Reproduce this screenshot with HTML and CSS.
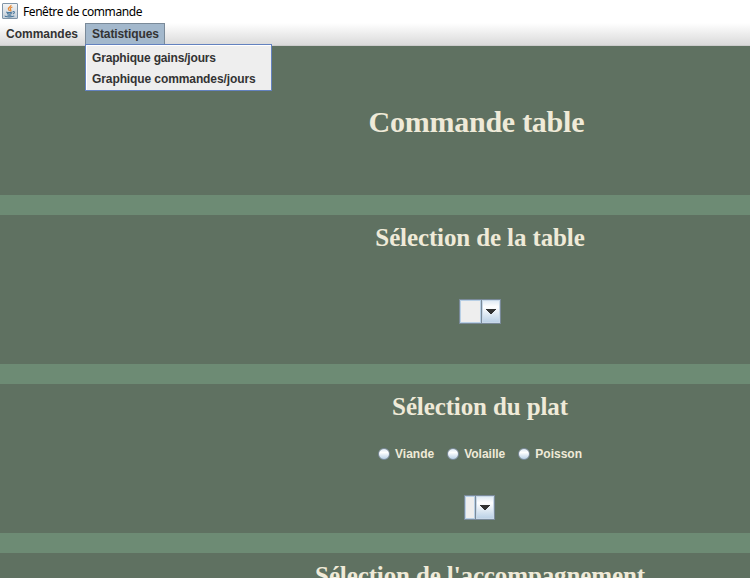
FILE: index.html
```
<!DOCTYPE html>
<html lang="fr">
<head>
<meta charset="utf-8">
<title>Fenêtre de commande</title>
<link rel="stylesheet" href="styles.css">
</head>
<body>
<header class="titlebar">
  <svg class="java" width="16" height="16" viewBox="0 0 16 16">
    <defs><linearGradient id="tile" x1="0" y1="0" x2="0" y2="1"><stop offset="0" stop-color="#f4f5f6"/><stop offset="1" stop-color="#c3ced8"/></linearGradient></defs>
    <rect x=".5" y=".5" width="15" height="15" rx=".5" fill="url(#tile)" stroke="#8095a8"/>
    <path d="M9 2C9.7 3.8 5.4 4.4 6.4 6.3L7.5 8M10.4 4C7.7 5 7.9 5.8 8.6 6.6 9.2 7.3 9 7.8 8.2 8.3" fill="none" stroke="#e5862f" stroke-width="1.2"/>
    <path d="M4.2 8.9C5.5 9.5 8.8 9.5 10.4 8.9M5 10.6C6.5 11.1 8.5 11.1 9.8 10.6M5.4 12C6.7 12.4 8.2 12.4 9.4 12M10.8 8.6C13 8.1 13 10.3 10.8 11M3.2 12.8C2.4 14.1 10.8 14.3 12.3 12.9" fill="none" stroke="#4c789b" stroke-width="1.1"/>
  </svg>
  <span class="title">Fenêtre de commande</span>
</header>
<nav class="menubar">
  <div class="menu">Commandes</div>
  <div class="menu open">Statistiques
    <div class="popup">
      <div class="item">Graphique gains/jours</div>
      <div class="item">Graphique commandes/jours</div>
    </div>
  </div>
</nav>
<main class="content">
  <section class="panel hero"><h1>Commande table&nbsp;</h1></section>
  <section class="panel">
    <h2>Sélection de la table</h2>
    <div class="combo table-combo"><span class="value"></span><span class="arrow"><svg width="10" height="5" viewBox="0 0 10 5" shape-rendering="crispEdges"><path d="M0 0H10V1H9V2H8V3H7V4H6V5H4V4H3V3H2V2H1V1H0Z"/></svg></span></div>
  </section>
  <section class="panel">
    <h2>Sélection du plat</h2>
    <div class="radios">
      <label><i class="dot"></i>Viande</label>
      <label><i class="dot"></i>Volaille</label>
      <label><i class="dot"></i>Poisson</label>
    </div>
    <div class="combo dish-combo"><span class="value"></span><span class="arrow"><svg width="10" height="5" viewBox="0 0 10 5" shape-rendering="crispEdges"><path d="M0 0H10V1H9V2H8V3H7V4H6V5H4V4H3V3H2V2H1V1H0Z"/></svg></span></div>
  </section>
  <section class="panel"><h2>Sélection de l'accompagnement</h2></section>
</main>
</body>
</html>
```
FILE: styles.css
```
* { box-sizing: border-box; }
html, body { margin: 0; height: 578px; overflow: hidden; }
body { background: #6d8b74; font: bold 12px/14px "Liberation Sans", Arial, sans-serif; color: #333; }
.titlebar { display: flex; align-items: center; height: 23px; padding-left: 2px; background: #fff; }
.java { margin-top: -1px; }
.title { margin-left: 5px; margin-top: 1px; font: 12px/16px "Noto Sans", sans-serif; letter-spacing: -0.43px; color: #000; white-space: nowrap; }
.menubar { display: flex; height: 23px; background: linear-gradient(#fff, #dadada); border-bottom: 1px solid #ccc; }
.menu { height: 22px; padding: 4px 7px 0 6px; }
.open { position: relative; width: 80px; padding: 3px 6px 0; background: #a3b8cc; border: 1px solid #7a8a99; border-bottom: 0; letter-spacing: -0.1px; }
.popup { position: absolute; z-index: 1; left: -1px; top: 20px; width: 187px; height: 47px; padding: 2px 1px; background: #eee; border: 1px solid #6382bf; box-shadow: inset 1px 1px #fff; }
.item { height: 21px; padding: 4px 5px 0; white-space: nowrap; }
.item:first-child { letter-spacing: -0.17px; }
.content { display: flex; flex-direction: column; gap: 20px; width: 960px; height: 532px; overflow: hidden; }
.panel { display: flex; flex-direction: column; align-items: center; height: 149px; flex: none; background: #5f7161; color: #efead8; }
h1, h2 { margin: 0; font-family: "Liberation Serif", "Times New Roman", serif; font-weight: bold; white-space: nowrap; }
h1 { font-size: 30px; line-height: 34px; letter-spacing: -0.25px; }
h2 { margin-top: 9px; font-size: 25px; line-height: 28px; letter-spacing: -0.12px; }
.hero { justify-content: center; padding-top: 3px; }
.combo { display: flex; height: 25px; border: 1px solid #7a8a99; background: #eee; }
.value { flex: 1; border: 1px solid #b8cfe5; }
.arrow { display: flex; align-items: center; justify-content: center; width: 19px; border-left: 1px solid #7a8a99; background: linear-gradient(#dde8f3 0%, #fff 30%, #b8cfe5 100%); box-shadow: inset 0 0 0 1px #c8d8e8; }
.arrow path { fill: #333; }
.table-combo { width: 42px; margin-top: 47px; }
.dish-combo { width: 31px; margin-top: 34px; margin-right: 1px; }
.radios { display: flex; gap: 13px; margin-top: 26px; }
.radios label { display: flex; align-items: center; }
.dot { width: 12px; height: 12px; margin-right: 5px; border: 1px solid #7a8a99; border-radius: 50%; background: linear-gradient(#dde8f3, #fff 35%, #b8cfe5); }
```
